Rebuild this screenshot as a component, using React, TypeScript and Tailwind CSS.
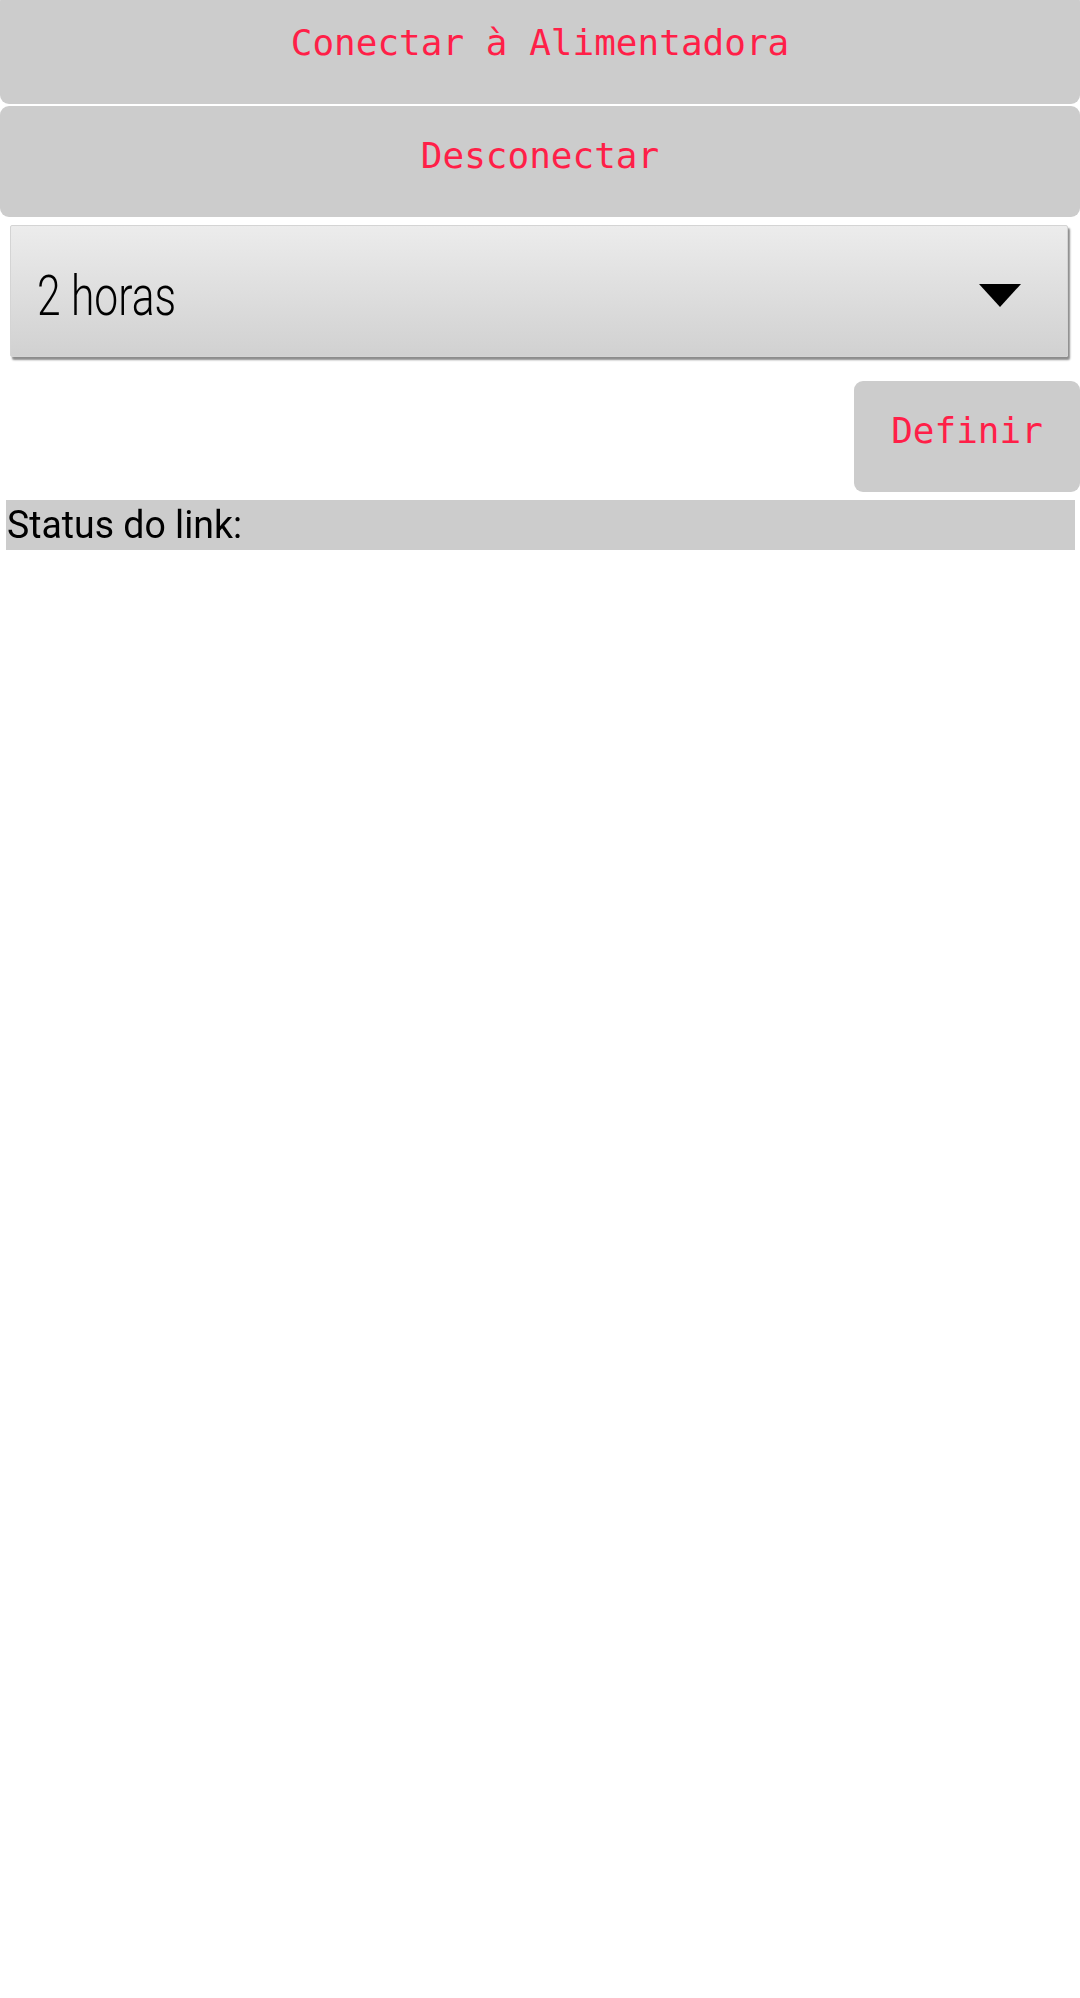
const mono = "font-['DejaVu_Sans_Mono',monospace]";
const sans = "font-['Roboto','Noto_Sans',sans-serif]";

const ActionButton = ({ label, className }: { label: string; className?: string }) => {
  return (
    <button
      className={`flex items-center justify-center rounded-[9px] bg-[#cccccc] pb-[11px] text-[36px] leading-none text-[#ff1f48] ${mono} ${className ?? ""}`}
    >
      {label}
    </button>
  );
};

const Select = ({ value }: { value: string }) => {
  return (
    <div className="ml-[10px] mr-[12px] mt-[8px] flex h-[132px] items-center justify-between rounded-[2px] border border-[#d4d4d4] bg-gradient-to-b from-[#ececec] to-[#d1d1d1] pl-[26px] pr-[46px] pt-[9px] shadow-[2px_3px_2px_rgba(0,0,0,0.45)]">
      <span className={`inline-block origin-left scale-x-[0.76] text-[56px] font-light leading-none text-black ${sans}`}>
        {value}
      </span>
      <svg width="42" height="23" viewBox="0 0 42 23" className="blur-[0.6px]">
        <polygon points="0,0 42,0 21,23" fill="#000" />
      </svg>
    </div>
  );
};

const App = () => {
  return (
    <div className="min-h-[1998px] w-[1080px] bg-white">
      <div className="flex flex-col gap-[2px]">
        <ActionButton label="Conectar à Alimentadora" className="-mt-[7px] h-[111px] w-full" />
        <ActionButton label="Desconectar" className="h-[111px] w-full" />
      </div>
      <Select value="2 horas" />
      <div className="mt-[24px] flex justify-end">
        <ActionButton label="Definir" className="h-[111px] w-[226px]" />
      </div>
      <div className="ml-[6px] mr-[5px] mt-[8px] flex h-[50px] items-center bg-[#cccccc] pl-[1px]">
        <span className={`inline-block origin-left scale-x-[0.96] text-[39px] leading-none text-black ${sans}`}>
          Status do link:
        </span>
      </div>
    </div>
  );
};

export default App;
